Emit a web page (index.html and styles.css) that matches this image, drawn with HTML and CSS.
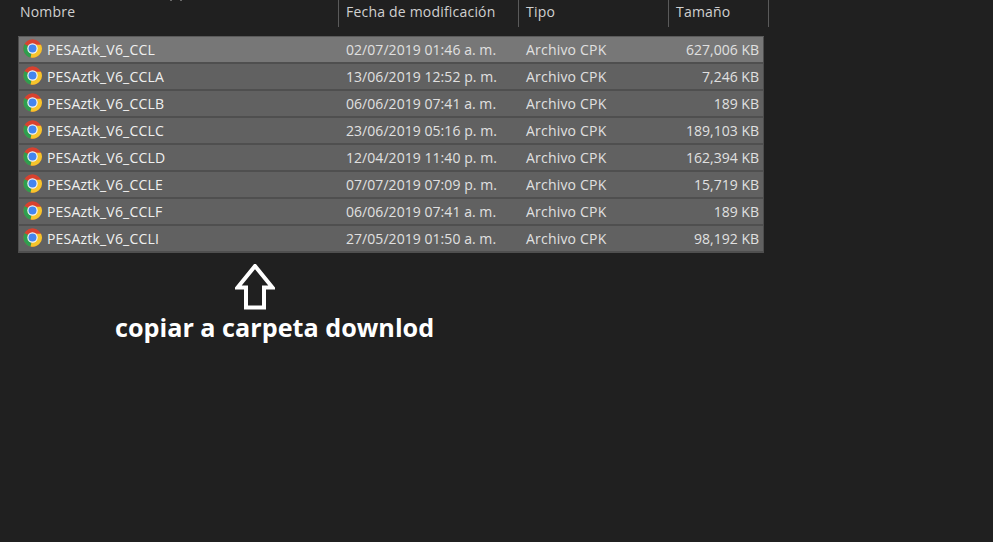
FILE: index.html
```html
<!DOCTYPE html>
<html lang="es">
<head>
<meta charset="utf-8">
<title>Archivos CPK</title>
<link rel="stylesheet" href="styles.css">
</head>
<body>
<svg class="defs" width="0" height="0" aria-hidden="true">
  <symbol id="chrome" viewBox="0 0 20 20">
    <circle cx="10" cy="10" r="9.7" fill="#d8412f"/>
    <path d="M10 10 L1.6 5.2 A9.7 9.7 0 0 0 8 19.5 Z" fill="#2f9e4f"/>
    <path d="M10 6 H19 A9.7 9.7 0 0 1 8 19.5 L10 10 Z" fill="#f6c52c"/>
    <circle cx="10" cy="10" r="5.5" fill="#f4f4f4"/>
    <circle cx="10" cy="10" r="4.2" fill="#4485ee"/>
  </symbol>
</svg>
<span class="clip-marks"></span>
<header class="head">
  <div class="hcell c-name">Nombre</div>
  <div class="hcell c-date">Fecha de modificación</div>
  <div class="hcell c-type">Tipo</div>
  <div class="hcell c-size">Tamaño</div>
</header>
<main class="list">
  <div class="row first"><div class="cell c-name"><svg class="ico"><use href="#chrome"/></svg>PESAztk_V6_CCL</div><div class="cell c-date">02/07/2019 01:46 a. m.</div><div class="cell c-type">Archivo CPK</div><div class="cell c-size num">627,006 KB</div></div>
  <div class="row"><div class="cell c-name"><svg class="ico"><use href="#chrome"/></svg>PESAztk_V6_CCLA</div><div class="cell c-date">13/06/2019 12:52 p. m.</div><div class="cell c-type">Archivo CPK</div><div class="cell c-size num">7,246 KB</div></div>
  <div class="row"><div class="cell c-name"><svg class="ico"><use href="#chrome"/></svg>PESAztk_V6_CCLB</div><div class="cell c-date">06/06/2019 07:41 a. m.</div><div class="cell c-type">Archivo CPK</div><div class="cell c-size num">189 KB</div></div>
  <div class="row"><div class="cell c-name"><svg class="ico"><use href="#chrome"/></svg>PESAztk_V6_CCLC</div><div class="cell c-date">23/06/2019 05:16 p. m.</div><div class="cell c-type">Archivo CPK</div><div class="cell c-size num">189,103 KB</div></div>
  <div class="row"><div class="cell c-name"><svg class="ico"><use href="#chrome"/></svg>PESAztk_V6_CCLD</div><div class="cell c-date">12/04/2019 11:40 p. m.</div><div class="cell c-type">Archivo CPK</div><div class="cell c-size num">162,394 KB</div></div>
  <div class="row"><div class="cell c-name"><svg class="ico"><use href="#chrome"/></svg>PESAztk_V6_CCLE</div><div class="cell c-date">07/07/2019 07:09 p. m.</div><div class="cell c-type">Archivo CPK</div><div class="cell c-size num">15,719 KB</div></div>
  <div class="row"><div class="cell c-name"><svg class="ico"><use href="#chrome"/></svg>PESAztk_V6_CCLF</div><div class="cell c-date">06/06/2019 07:41 a. m.</div><div class="cell c-type">Archivo CPK</div><div class="cell c-size num">189 KB</div></div>
  <div class="row"><div class="cell c-name"><svg class="ico"><use href="#chrome"/></svg>PESAztk_V6_CCLI</div><div class="cell c-date">27/05/2019 01:50 a. m.</div><div class="cell c-type">Archivo CPK</div><div class="cell c-size num">98,192 KB</div></div>
</main>
<section class="note">
  <svg class="arrow" width="40" height="46" viewBox="0 0 40 46"><path d="M20 2 L37.5 23.5 H29 V43.5 H11 V23.5 H2.5 Z" fill="none" stroke="#fff" stroke-width="4" stroke-linejoin="miter"/></svg>
  <p class="caption">copiar a carpeta downlod</p>
</section>
</body>
</html>
```

FILE: styles.css
```css
html, body { margin: 0; padding: 0; }
body {
  width: 993px;
  height: 542px;
  overflow: hidden;
  background: #202020;
  color: #dcdcdc;
  font-family: "Open Sans", "Noto Sans", sans-serif;
  font-size: 14px;
  letter-spacing: 0.2px;
}
.defs { position: absolute; }
.clip-marks {
  position: absolute;
  top: 0;
  left: 170px;
  width: 8px;
  height: 1px;
  border: solid #6a6a6a;
  border-width: 0 2px;
}
.head {
  display: flex;
  height: 27px;
  padding-left: 12px;
}
.hcell {
  box-sizing: border-box;
  border-right: 1px solid #5a5a5a;
  line-height: 23px;
  color: #d0d0d0;
}
.hcell.c-name { width: 327px; padding-left: 8px; }
.hcell.c-date { width: 180px; padding-left: 7px; }
.hcell.c-type { width: 150px; padding-left: 7px; }
.hcell.c-size { width: 100px; padding-left: 7px; }
.list {
  box-sizing: border-box;
  width: 746px;
  margin: 9px 0 0 18px;
  border-top: 1px solid #5a5a5a;
}
.row {
  box-sizing: border-box;
  display: flex;
  height: 27px;
  background: #616161;
  border: 1px solid #4d4d4d;
  border-width: 0 1px 2px 1px;
  border-bottom-color: #4f4f4f;
  line-height: 25px;
  color: #e0e0e0;
}
.row.first { background: #777; }
.cell { box-sizing: border-box; }
.cell.c-name { width: 320px; display: flex; align-items: flex-start; gap: 5px; padding-left: 4px; color: #f0f0f0; }
.cell.c-date { width: 180px; padding-left: 7px; letter-spacing: 0.05px; }
.cell.c-type { width: 150px; padding-left: 7px; }
.cell.c-size { width: 94px; letter-spacing: 0; }
.num { text-align: right; padding-right: 4px; }
.ico { width: 19px; height: 19px; flex: none; margin-top: 2px; }
.note {
  margin-top: 11px;
  display: flex;
  flex-direction: column;
  align-items: flex-start;
}
.arrow { display: block; margin-left: 235px; }
.caption {
  margin: 1px 0 0 115px;
  font-size: 25.2px;
  font-weight: 700;
  letter-spacing: 0;
  line-height: 33px;
  color: #fff;
}
```
